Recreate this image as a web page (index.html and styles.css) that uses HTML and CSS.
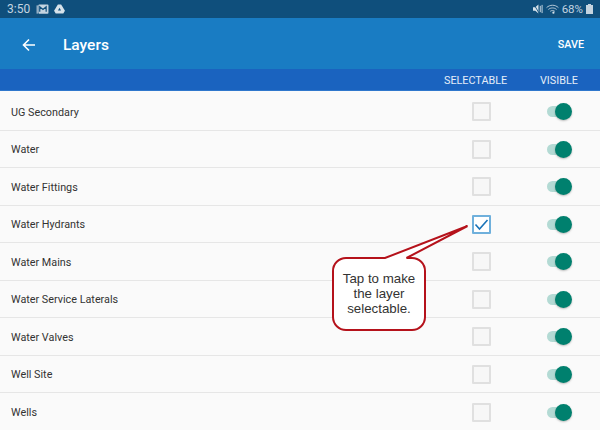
FILE: index.html
```html
<!DOCTYPE html>
<html lang="en">
<head>
<meta charset="utf-8">
<title>Layers</title>
<link rel="stylesheet" href="styles.css">
</head>
<body>
<div class="screen">
  <div class="status">
    <span class="time">3:50</span>
    <svg class="ic-mail" viewBox="0 0 14 12" width="13" height="11"><rect x="0.500" y="1.500" width="1.500" height="9" fill="#9fb8cb"/><rect x="2.500" y="0.500" width="11" height="10" rx="1" fill="#c4d4e0"/><path d="M4 8.500V3l3.500 3L11 3v5.500" fill="none" stroke="#0f4f7c" stroke-width="1.300"/></svg>
    <svg class="ic-drive" viewBox="0 0 12 11" width="11" height="10"><path d="M4.200 0.500h3.600L12 7.500l-1.800 3H1.800L0 7.500z" fill="#d6e2ea"/><path d="M6 4L4.300 7.200h3.400z" fill="#0f4f7c"/></svg>
    <span class="spacer"></span>
    <svg class="ic-mute" viewBox="0 0 11 11" width="10" height="10"><path d="M0 3.500h2.500L6 0.500v10l-3.500-3H0z" fill="#d6e2ea"/><path d="M1 0.500l6 10" stroke="#0f4f7c" stroke-width="1"/><path d="M8 2v7M10 1v9" stroke="#d6e2ea" stroke-width="1"/></svg>
    <svg class="ic-wifi" viewBox="0 0 14 11" width="13" height="10"><path d="M0.500 4C4 0.500 10 0.500 13.500 4M2.500 6C5 3.800 9 3.800 11.500 6M4.500 8C6 6.900 8 6.900 9.500 8" fill="none" stroke="#c4d4e0" stroke-width="1"/><circle cx="8" cy="9.500" r="1.200" fill="#d6e2ea"/></svg>
    <span class="pct">68%</span>
    <svg class="ic-batt" viewBox="0 0 7 10" width="7" height="10"><path d="M2 0h3v1h2v9H0V1h2z" fill="#c4d4e0"/></svg>
  </div>
  <header class="toolbar">
    <svg class="back" viewBox="0 0 14 14" width="14" height="14"><path d="M13 7H2M7 1.500L1.500 7 7 12.500" fill="none" stroke="#fff" stroke-width="1.600"/></svg>
    <h1 class="title">Layers</h1>
    <span class="save">SAVE</span>
  </header>
  <div class="heads">
    <span class="head-sel">SELECTABLE</span>
    <span class="head-vis">VISIBLE</span>
  </div>
  <ul class="list">
    <li class="row"><span class="name">UG Secondary</span><span class="check"></span><span class="toggle"><i class="thumb"></i></span></li>
    <li class="row"><span class="name">Water</span><span class="check"></span><span class="toggle"><i class="thumb"></i></span></li>
    <li class="row"><span class="name">Water Fittings</span><span class="check"></span><span class="toggle"><i class="thumb"></i></span></li>
    <li class="row"><span class="name">Water Hydrants</span><span class="check on"><svg viewBox="0 0 19 19" width="19" height="19"><path d="M3.500 9.500l4 4.500 8-9" fill="none" stroke="#1a73b8" stroke-width="1.600"/></svg></span><span class="toggle"><i class="thumb"></i></span></li>
    <li class="row"><span class="name">Water Mains</span><span class="check"></span><span class="toggle"><i class="thumb"></i></span></li>
    <li class="row"><span class="name">Water Service Laterals</span><span class="check"></span><span class="toggle"><i class="thumb"></i></span></li>
    <li class="row"><span class="name">Water Valves</span><span class="check"></span><span class="toggle"><i class="thumb"></i></span></li>
    <li class="row"><span class="name">Well Site</span><span class="check"></span><span class="toggle"><i class="thumb"></i></span></li>
    <li class="row"><span class="name">Wells</span><span class="check"></span><span class="toggle"><i class="thumb"></i></span></li>
  </ul>
  <div class="callout">
    <svg class="callout-shape" viewBox="0 0 140 110" width="140" height="110"><path d="M14 33H53L135.500 1 74.500 33H80a13 13 0 0 1 13 13V92a13 13 0 0 1-13 13H14a13 13 0 0 1-13-13V46a13 13 0 0 1 13-13z" fill="#fff" stroke="#b5121b" stroke-width="2"/></svg>
    <p class="callout-text">Tap to make<br>the layer<br>selectable.</p>
  </div>
</div>
</body>
</html>
```

FILE: styles.css
```css
* { box-sizing: border-box; }
html, body { margin: 0; padding: 0; }
body { background: #fafafa; font-family: Roboto, "Liberation Sans", sans-serif; }
.screen { position: relative; width: 600px; height: 430px; overflow: hidden; background: #fafafa; }
.status { height: 18px; background: #0f4f7c; display: flex; align-items: center; padding: 0 7px 0 7px; color: #c4d4e0; }
.time { font-size: 12px; margin-right: 6px; }
.ic-mail { margin-right: 5px; }
.spacer { flex: 1; }
.ic-mute { margin-right: 3px; }
.ic-wifi { margin-right: 3px; }
.pct { font-size: 11.500px; margin-right: 3px; }
.toolbar { height: 51px; padding: 2px 16px 0 22px; background: #197cc3; display: flex; align-items: center; color: #fff; }
.back { margin-right: 27px; }
.title { flex: 1; margin: 0; font-size: 15.500px; font-weight: 500; }
.save { font-size: 10.800px; font-weight: 500; }
.heads { height: 22px; padding-top: 1px; background: #1a63bf; border-bottom: 1px solid #2f77cc; display: flex; align-items: center; color: #e4edf8; font-size: 10.800px; }
.head-sel { margin-left: 444px; width: 96px; }
.head-vis { width: 50px; text-align: left; }
.list { margin: 2px 0 0; padding: 0; list-style: none; display: grid; grid-auto-rows: 37.500px; }
.row { display: flex; align-items: center; padding: 1px 0 0 11px; border-bottom: 1px solid #e6e6e6; }
.row:last-child { border-bottom: 0; }
.name { flex: 1; padding-top: 1px; font-size: 10.800px; color: #333; }
.check { width: 19px; height: 19px; border: 2px solid #e0e0e0; border-radius: 1px; background: #f7f7f7; margin-right: 56px; flex: none; position: relative; }
.check.on { border-color: #6fb0dc; background: #fff; }
.check svg { position: absolute; left: -2px; top: -2px; display: block; }
.toggle { width: 24px; height: 11px; border-radius: 6px; background: #b3dad4; margin-right: 29px; flex: none; position: relative; }
.thumb { position: absolute; right: -1px; top: -3px; width: 17px; height: 17px; border-radius: 50%; background: #00806e; box-shadow: 0 1px 2px rgba(0,0,0,.25); }
.callout { position: absolute; left: 331.500px; top: 225px; width: 140px; height: 110px; }
.callout-shape { display: block; }
.callout-text { position: absolute; left: 1px; top: 45.500px; width: 93px; margin: 0; text-align: center; font-family: "Liberation Sans", Arial, sans-serif; font-size: 13.300px; line-height: 15.200px; color: #333; }
```
